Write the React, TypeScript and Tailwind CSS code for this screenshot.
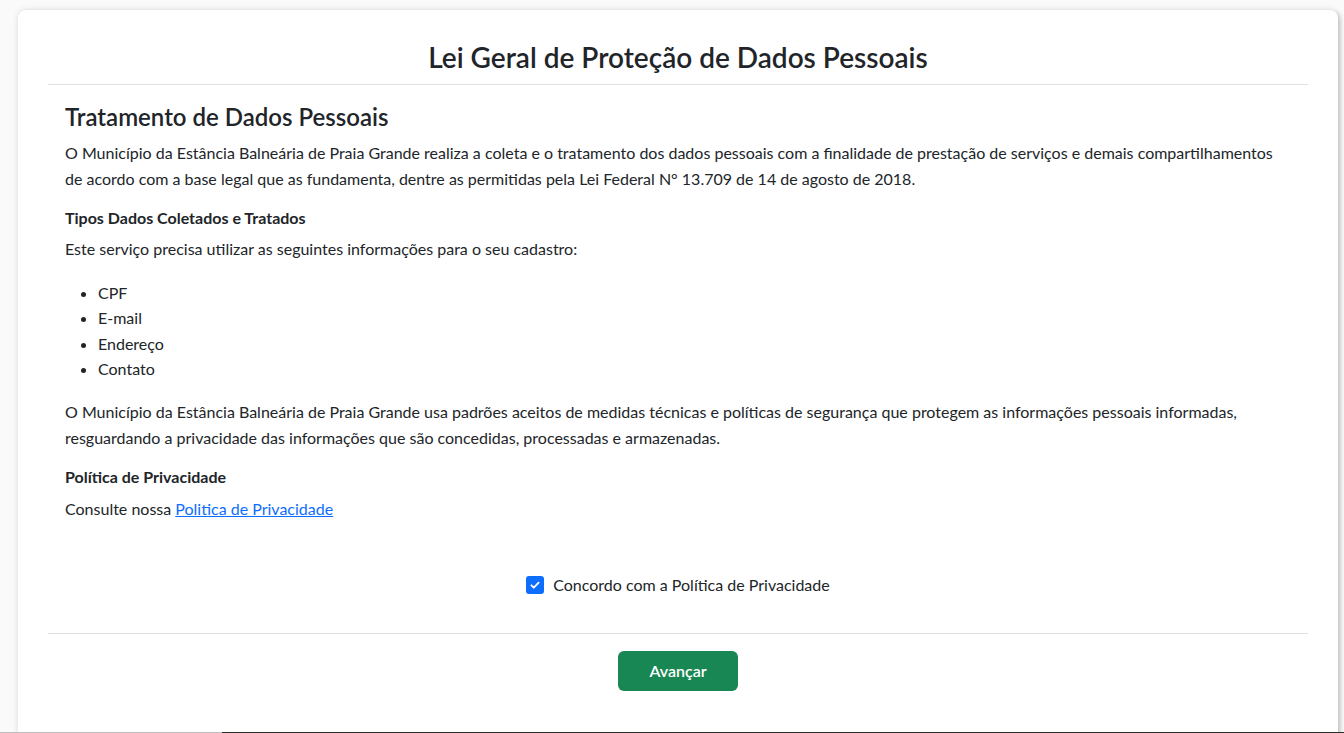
import React from "react";

export default function App() {
  const font = { fontFamily: "Lato, 'Noto Sans', sans-serif" };
  return (
    <div className="h-[733px] overflow-hidden flex flex-col bg-[#fafafa] text-[#212529]" style={font}>
      <div className="flex-1 overflow-hidden pl-[18px] pr-[6px] pt-[10px]">
        <div className="bg-white rounded-lg shadow-[0_0_6px_rgba(0,0,0,0.12),3px_2px_4px_rgba(0,0,0,0.15)] px-[30px] h-[760px]">
          <div className="border-b border-[#dee2e6] pt-[30px] pb-[10px] text-center">
            <h1 className="text-[28px] leading-[34px] font-semibold">Lei Geral de Proteção de Dados Pessoais</h1>
          </div>
          <div className="px-[17px] pt-[17px]">
            <h2 className="text-[24px] leading-[29px] font-semibold">Tratamento de Dados Pessoais</h2>
            <p className="mt-[9px] text-[16px] leading-[26px]">
              O Município da Estância Balneária de Praia Grande realiza a coleta e o tratamento dos dados pessoais com a finalidade de prestação de serviços e demais compartilhamentos de acordo com a base legal que as fundamenta, dentre as permitidas pela Lei Federal N° 13.709 de 14 de agosto de 2018.
            </p>
            <h3 className="mt-[14px] text-[16px] leading-[24px] font-bold">Tipos Dados Coletados e Tratados</h3>
            <p className="mt-[6px] text-[16px] leading-[26px]">Este serviço precisa utilizar as seguintes informações para o seu cadastro:</p>
            <ul className="mt-[18px] list-disc pl-[33px] text-[16px] leading-[25.3px]">
              <li>CPF</li>
              <li>E-mail</li>
              <li>Endereço</li>
              <li>Contato</li>
            </ul>
            <p className="mt-[18px] text-[16px] leading-[26px]">
              O Município da Estância Balneária de Praia Grande usa padrões aceitos de medidas técnicas e políticas de segurança que protegem as informações pessoais informadas, resguardando a privacidade das informações que são concedidas, processadas e armazenadas.
            </p>
            <h3 className="mt-[14px] text-[16px] leading-[24px] font-bold">Política de Privacidade</h3>
            <p className="mt-[7px] text-[16px] leading-[26px]">
              Consulte nossa <a href="#" className="text-[#0d6efd] underline">Politica de Privacidade</a>
            </p>
            <div className="mt-[50px] flex items-center justify-center gap-[9px] h-[26px]">
              <span className="w-[18px] h-[18px] rounded-[3px] bg-[#0d6efd] flex items-center justify-center">
                <svg width="12" height="12" viewBox="0 0 20 20" fill="none">
                  <path d="M4 10.5l4 4 8-8.5" stroke="white" strokeWidth="3" strokeLinecap="round" strokeLinejoin="round" />
                </svg>
              </span>
              <span className="text-[16px] leading-[26px]">Concordo com a Política de Privacidade</span>
            </div>
          </div>
          <div className="mt-[35px] border-t border-[#dee2e6] pt-[17px] flex justify-center">
            <button className="w-[120px] h-[40px] rounded-[6px] bg-[#198754] text-white text-[16px] font-semibold">Avançar</button>
          </div>
        </div>
      </div>
      <div className="h-px flex">
        <div className="w-[222px] bg-[#bdbdbd]" />
        <div className="flex-1 bg-[#2b2f2b]" />
      </div>
    </div>
  );
}
